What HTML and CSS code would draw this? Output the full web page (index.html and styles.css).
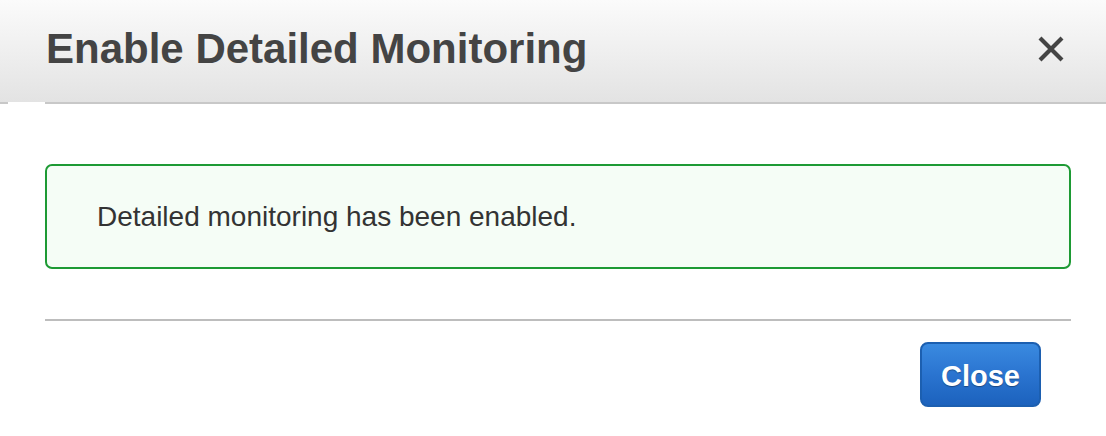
FILE: index.html
```html
<!DOCTYPE html>
<html>
<head>
<meta charset="utf-8">
<link rel="stylesheet" href="styles.css">
</head>
<body>
<div class="modal">
  <div class="modal-header">
    <h1 class="modal-title">Enable Detailed Monitoring</h1>
    <button class="close-x" aria-label="Close">
      <svg width="28" height="28" viewBox="0 0 28 28"><path d="M3 3 L25 25 M25 3 L3 25" stroke="#444" stroke-width="4.2" stroke-linecap="butt" fill="none"/></svg>
    </button>
  </div>
  <div class="modal-body">
    <div class="alert-success">Detailed monitoring has been enabled.</div>
  </div>
  <div class="modal-footer">
    <button class="btn-primary">Close</button>
  </div>
</div>
</body>
</html>
```
FILE: styles.css
```css
html, body {
  margin: 0;
  padding: 0;
  background: #fff;
  font-family: "Liberation Sans", Arial, Helvetica, sans-serif;
}
.modal {
  width: 1106px;
  height: 436px;
  overflow: hidden;
}
.modal-header {
  position: relative;
  height: 102px;
  background: linear-gradient(to bottom, #fbfbfb 0%, #e3e3e3 100%);
  display: flex;
  align-items: center;
  justify-content: space-between;
  padding: 0 40px 0 46px;
}
.modal-header::after {
  content: "";
  position: absolute;
  left: 0;
  right: 0;
  bottom: -2px;
  height: 2px;
  background: linear-gradient(to right, #c8c8c8 0, #c8c8c8 8px, transparent 8px, transparent 45px, #c8c8c8 45px);
}
.modal-title {
  margin: 0;
  font-size: 42px;
  font-weight: bold;
  color: #444;
  padding-bottom: 5px;
}
.close-x {
  border: 0;
  background: none;
  padding: 0;
  width: 30px;
  height: 30px;
  display: flex;
  align-items: center;
  justify-content: center;
  margin-bottom: 4px;
}
.modal-body {
  padding: 62px 35px 0 45px;
}
.alert-success {
  height: 101px;
  box-sizing: content-box;
  border: 2px solid #1d9a34;
  border-radius: 7px;
  background: #f5fdf6;
  color: #333;
  font-size: 28px;
  display: flex;
  align-items: center;
  padding: 0 0 0 50px;
}
.modal-footer {
  margin: 50px 35px 0 45px;
  border-top: 2px solid #bdbdbd;
  display: flex;
  justify-content: flex-end;
  padding: 21px 30px 0 0;
}
.btn-primary {
  width: 121px;
  height: 65px;
  border: 2px solid #1c5fb0;
  border-radius: 8px;
  background: linear-gradient(to bottom, #3a8ae0 0%, #2a74d0 50%, #1c62bd 100%);
  color: #fff;
  font-family: "Liberation Sans", Arial, sans-serif;
  font-size: 29px;
  font-weight: bold;
  text-shadow: 0 1px 1px rgba(0,0,0,0.35);
  padding: 3px 0 0 0;
}
```
